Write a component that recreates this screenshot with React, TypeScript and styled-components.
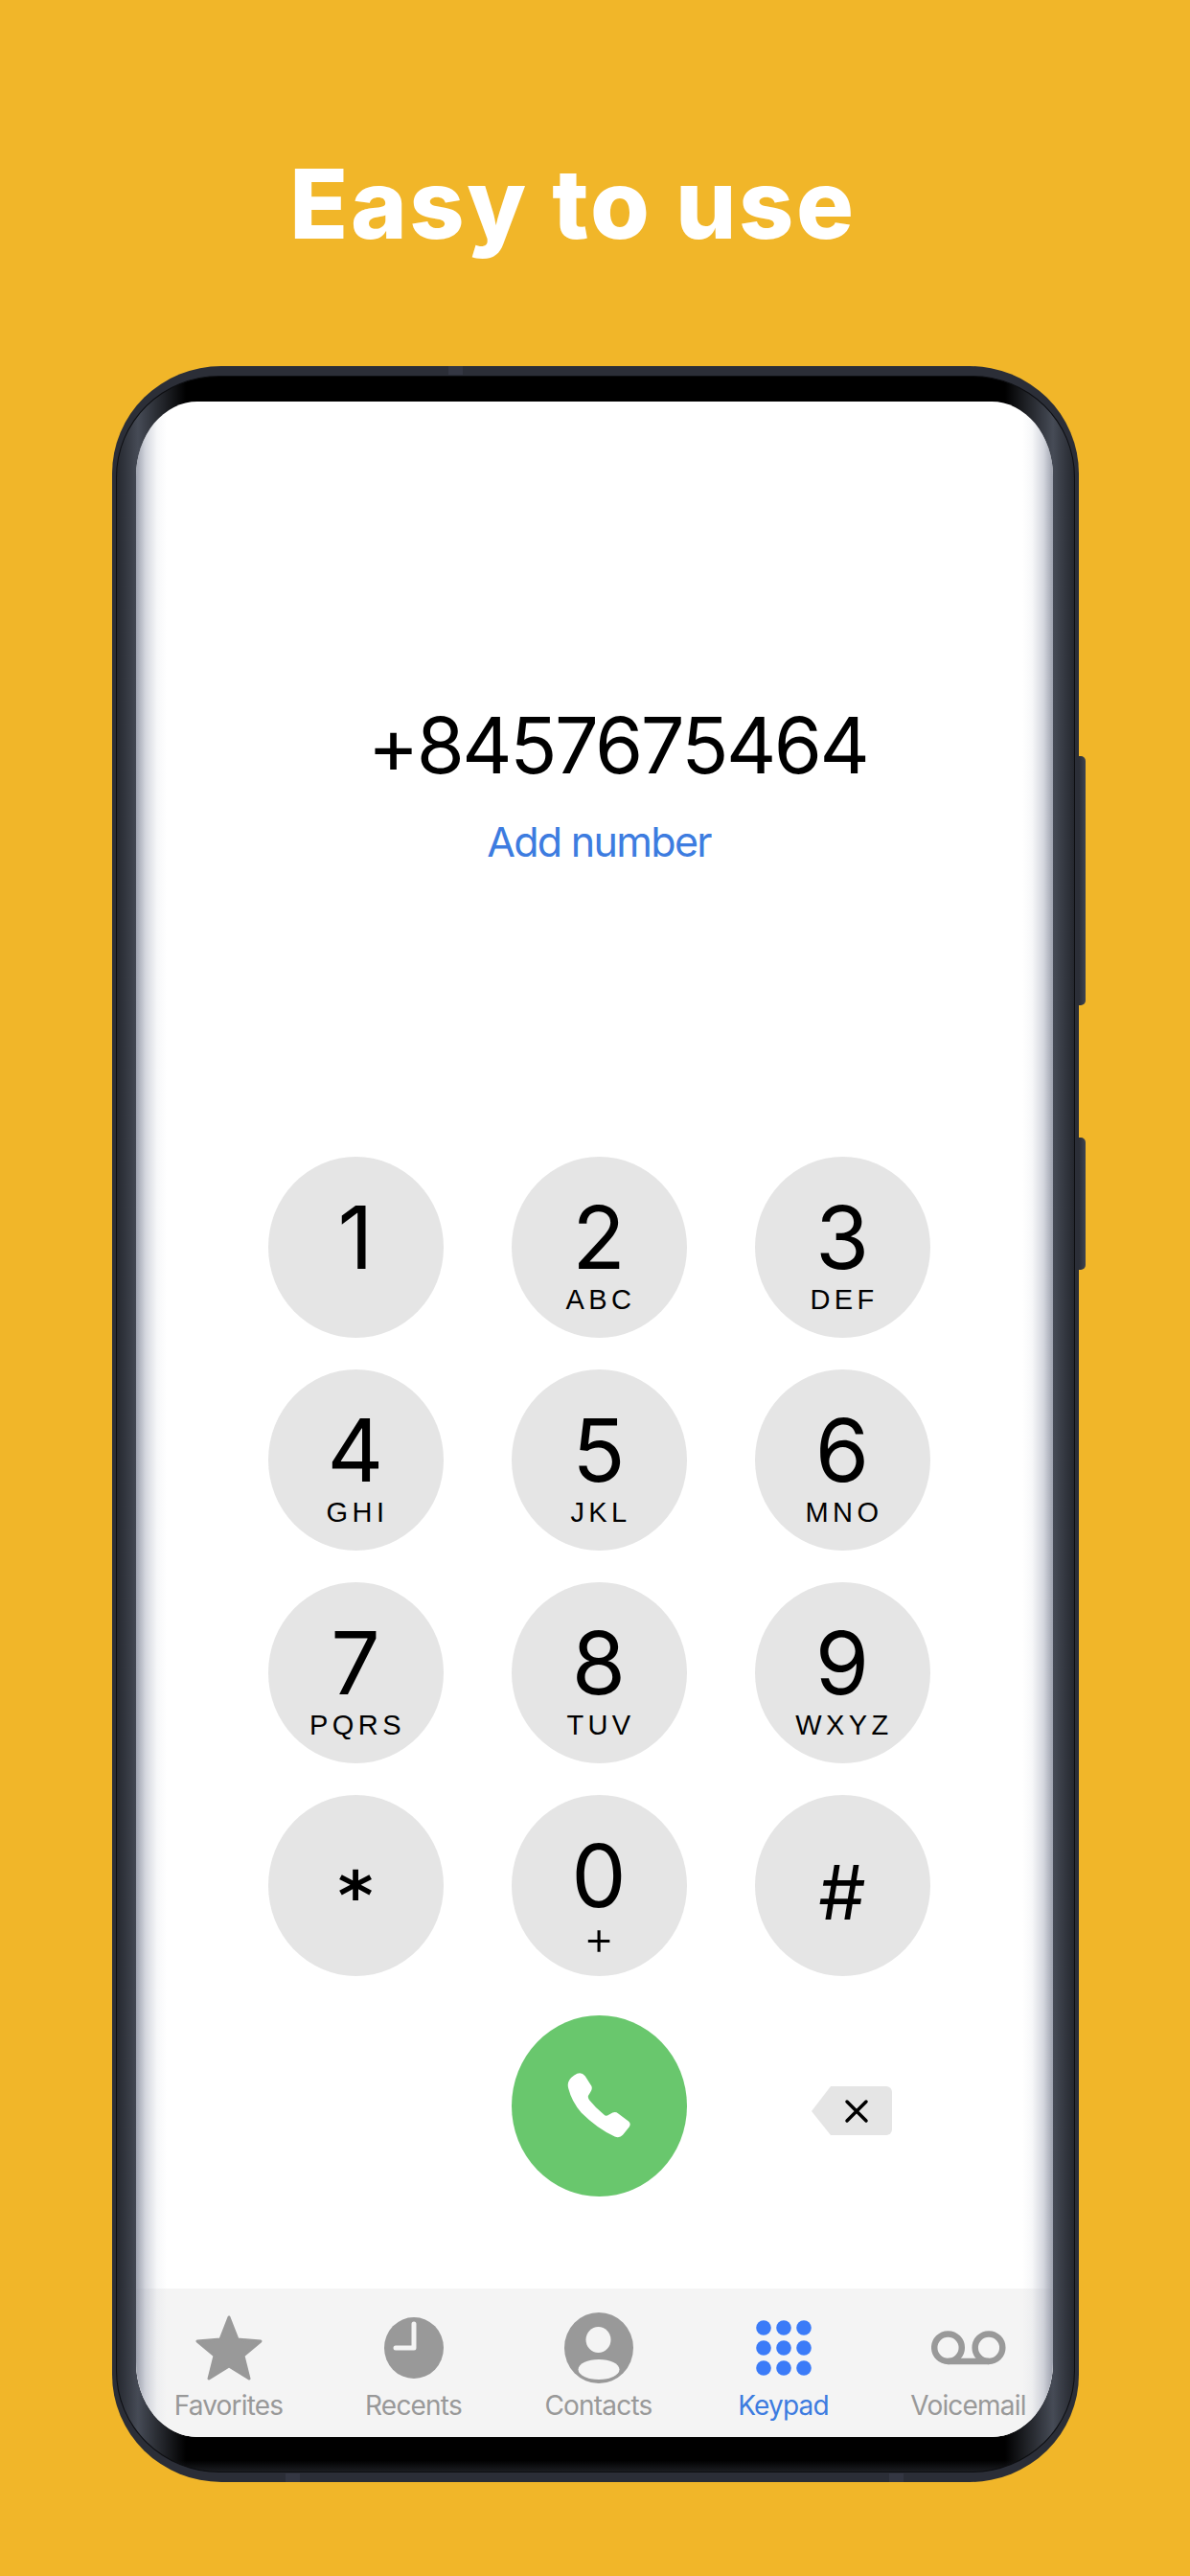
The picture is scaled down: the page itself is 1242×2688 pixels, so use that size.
import React from 'react';
import styled, { createGlobalStyle } from 'styled-components';

const GlobalStyle = createGlobalStyle`
  html, body {
    margin: 0;
    padding: 0;
    background: #f1b629;
  }
`;

const keys = [
  { digit: '1', sub: '' },
  { digit: '2', sub: 'ABC' },
  { digit: '3', sub: 'DEF' },
  { digit: '4', sub: 'GHI' },
  { digit: '5', sub: 'JKL' },
  { digit: '6', sub: 'MNO' },
  { digit: '7', sub: 'PQRS' },
  { digit: '8', sub: 'TUV' },
  { digit: '9', sub: 'WXYZ' },
];

function StarIcon() {
  return (
    <svg width="70" height="68" viewBox="0 0 70 68">
      <path
        d="M35 2 L44 25 L68 27 L50 42 L56 66 L35 53 L14 66 L20 42 L2 27 L26 25 Z"
        fill="#999"
        stroke="#999"
        strokeWidth="3"
        strokeLinejoin="round"
      />
    </svg>
  );
}

function ClockIcon() {
  return (
    <svg width="62" height="64" viewBox="0 0 62 64">
      <ellipse cx="31" cy="32" rx="31" ry="32" fill="#999" />
      <path d="M31 7 V32 H12" fill="none" stroke="#f4f4f4" strokeWidth="5" strokeLinecap="round" strokeLinejoin="round" />
    </svg>
  );
}

function ContactIcon() {
  return (
    <svg width="72" height="74" viewBox="0 0 72 74">
      <ellipse cx="36" cy="37" rx="36" ry="37" fill="#999" />
      <ellipse cx="35.5" cy="28.5" rx="13" ry="13.5" fill="#f4f4f4" />
      <ellipse cx="36" cy="59.5" rx="21.5" ry="10.5" fill="#f4f4f4" />
    </svg>
  );
}

function DotsIcon() {
  const centers = [8, 29, 50];
  return (
    <svg width="58" height="58" viewBox="0 0 58 58">
      {centers.map((cy) =>
        centers.map((cx) => <circle key={`${cx}-${cy}`} cx={cx} cy={cy} r="7.8" fill="#3b7bf8" />)
      )}
    </svg>
  );
}

function VoicemailIcon() {
  return (
    <svg width="78" height="36" viewBox="0 0 78 36" fill="none" stroke="#999" strokeWidth="6.5">
      <circle cx="17.5" cy="17.7" r="14.3" />
      <circle cx="60" cy="17.7" r="14.3" />
      <path d="M17.5 32 H60" />
    </svg>
  );
}

function PhoneIcon() {
  return (
    <svg width="70" height="72" viewBox="270 245 210 215">
      <path
        fill="#fff"
        d="M298 258 Q318 243 332 260 L352 292 Q356 302 348 312 L342 322 Q340 328 345 335 Q365 360 390 380 Q396 386 402 384 L418 375 Q428 371 436 378 L468 402 Q477 410 470 420 L450 445 Q440 456 425 450 Q370 425 320 375 Q290 340 280 300 Q272 275 298 258 Z"
      />
    </svg>
  );
}

function BackspaceIcon() {
  return (
    <svg width="84" height="51" viewBox="0 0 84 51">
      <path d="M20 0 H78 A6 6 0 0 1 84 6 V45 A6 6 0 0 1 78 51 H20 L0 26 Z" fill="#e5e5e5" />
      <path d="M37 16 L57 36 M57 16 L37 36" stroke="#000" strokeWidth="3.5" strokeLinecap="round" />
    </svg>
  );
}

const tabs = [
  { label: 'Favorites', icon: <StarIcon /> },
  { label: 'Recents', icon: <ClockIcon /> },
  { label: 'Contacts', icon: <ContactIcon /> },
  { label: 'Keypad', icon: <DotsIcon />, active: true },
  { label: 'Voicemail', icon: <VoicemailIcon /> },
];

export default function App() {
  return (
    <Page>
      <GlobalStyle />
      <Title>Easy to use</Title>
      <Shell>
        <TopNub />
        <BottomNub $left={181} />
        <BottomNub $left={811} />
        <SideButton $top={407} $height={260} />
        <SideButton $top={805} $height={138} />
        <Bezel>
          <Screen>
            <Dialed>+8457675464</Dialed>
            <AddNumber>Add number</AddNumber>
            <Keypad>
              {keys.map((key) => (
                <Key key={key.digit}>
                  <Digit>{key.digit}</Digit>
                  <Letters>{key.sub}</Letters>
                </Key>
              ))}
              <Key>
                <Asterisk>*</Asterisk>
              </Key>
              <Key>
                <Digit>0</Digit>
                <Plus>+</Plus>
              </Key>
              <Key>
                <Hash>#</Hash>
              </Key>
              <span />
              <CallButton>
                <PhoneIcon />
              </CallButton>
              <BackspaceCell>
                <BackspaceIcon />
              </BackspaceCell>
            </Keypad>
            <TabBar>
              {tabs.map((tab) => (
                <Tab key={tab.label}>
                  <TabIcon>{tab.icon}</TabIcon>
                  <TabLabel $active={tab.active}>{tab.label}</TabLabel>
                </Tab>
              ))}
            </TabBar>
          </Screen>
        </Bezel>
      </Shell>
    </Page>
  );
}

const Page = styled.div`
  display: flex;
  flex-direction: column;
  align-items: center;
  box-sizing: border-box;
  width: 1242px;
  height: 2688px;
  padding-top: 163px;
  overflow: hidden;
  background: #f1b629;
  font-family: Inter, 'Liberation Sans', Arial, sans-serif;
`;

const Title = styled.h1`
  margin: 0 46px 119px 0;
  color: #fff;
  font-size: 100px;
  font-weight: 800;
  line-height: 100px;
  letter-spacing: 2.6px;
`;

const Shell = styled.div`
  position: relative;
  box-sizing: border-box;
  flex-shrink: 0;
  width: 1009px;
  height: 2208px;
  padding: 10px 4px;
  border-radius: 114px / 112px;
  background: #2b2e37;
`;

const TopNub = styled.div`
  position: absolute;
  top: 0;
  left: 351px;
  width: 15px;
  height: 9px;
  background: #343743;
`;

const BottomNub = styled.div<{ $left: number }>`
  position: absolute;
  bottom: 0;
  left: ${({ $left }) => $left}px;
  width: 15px;
  height: 9px;
  background: #343743;
`;

const SideButton = styled.div<{ $top: number; $height: number }>`
  position: absolute;
  top: ${({ $top }) => $top}px;
  right: -7px;
  width: 7px;
  height: ${({ $height }) => $height}px;
  border-radius: 0 5px 5px 0;
  background: linear-gradient(90deg, #2a2d35, #414550);
`;

const Bezel = styled.div`
  box-sizing: border-box;
  width: 100%;
  height: 100%;
  padding: 25.5px 20.5px 35.5px;
  border: 1.5px solid #0d0e11;
  border-radius: 108px / 106px;
  background:
    linear-gradient(0deg, #1b1d21, transparent 12px),
    linear-gradient(
      90deg,
      #25282f 0,
      #464b56 22px,
      #000 72px,
      #000 calc(100% - 72px),
      #464b56 calc(100% - 22px),
      #25282f 100%
    );
`;

const Screen = styled.div`
  position: relative;
  display: flex;
  flex-direction: column;
  align-items: center;
  box-sizing: border-box;
  width: 957px;
  height: 2124px;
  padding-top: 318px;
  border-radius: 64px / 78px;
  overflow: hidden;
  background: #fff;

  &::after {
    content: '';
    position: absolute;
    inset: 0;
    pointer-events: none;
    background: linear-gradient(
      90deg,
      rgba(140, 145, 160, 0.85) 0,
      rgba(170, 175, 190, 0.5) 10px,
      rgba(200, 205, 215, 0.15) 22px,
      rgba(255, 255, 255, 0) 32px,
      rgba(255, 255, 255, 0) calc(100% - 32px),
      rgba(200, 205, 215, 0.15) calc(100% - 22px),
      rgba(170, 175, 190, 0.5) calc(100% - 10px),
      rgba(140, 145, 160, 0.85) 100%
    );
  }
`;

const Dialed = styled.div`
  margin-left: 48px;
  color: #000;
  font-size: 81px;
  font-weight: 380;
  line-height: 83px;
  letter-spacing: -2.5px;
`;

const AddNumber = styled.div`
  margin: 37px 0 0 9px;
  color: #3d7ce0;
  font-size: 43px;
  font-weight: 380;
  line-height: 43px;
  letter-spacing: -1.7px;
`;

const Keypad = styled.div`
  display: grid;
  grid-template-columns: repeat(3, 183px);
  grid-auto-rows: 189px;
  column-gap: 71px;
  row-gap: 33px;
  margin: 307px 0 0 9px;
`;

const Key = styled.div`
  display: flex;
  flex-direction: column;
  align-items: center;
  padding-top: 39px;
  box-sizing: border-box;
  border-radius: 50%;
  background: #e5e5e5;
  color: #000;
`;

const Digit = styled.div`
  font-size: 91px;
  font-weight: 370;
  line-height: 91px;
`;

const Letters = styled.div`
  margin-top: 4px;
  padding-left: 4px;
  font-family: 'Liberation Sans', Arial, sans-serif;
  font-size: 29px;
  line-height: 30px;
  letter-spacing: 4.4px;
`;

const Plus = styled.div`
  margin-top: 4px;
  font-size: 50px;
  font-weight: 300;
  line-height: 30px;
`;

const Asterisk = styled.div`
  margin-top: 27px;
  font-family: 'DejaVu Sans', sans-serif;
  font-size: 70px;
  font-weight: 700;
  line-height: 78px;
`;

const Hash = styled.div`
  margin-top: 22px;
  font-size: 78px;
  font-weight: 370;
  line-height: 82px;
`;

const CallButton = styled.div`
  display: flex;
  align-items: center;
  justify-content: center;
  height: 189px;
  margin-top: 8px;
  border-radius: 50%;
  background: #69c76d;
`;

const BackspaceCell = styled.div`
  display: flex;
  align-items: center;
  padding: 26px 0 0 59px;
`;

const TabBar = styled.div`
  display: grid;
  grid-template-columns: repeat(5, 193px);
  align-self: stretch;
  box-sizing: border-box;
  height: 155px;
  margin-top: auto;
  padding-top: 22px;
  background: #f4f4f4;
`;

const Tab = styled.div`
  display: flex;
  flex-direction: column;
  align-items: center;
`;

const TabIcon = styled.div`
  display: flex;
  align-items: center;
  justify-content: center;
  height: 80px;
`;

const TabLabel = styled.div<{ $active?: boolean }>`
  margin-top: 6px;
  color: ${({ $active }) => ($active ? '#3d7ce0' : '#999')};
  font-size: 28px;
  line-height: 28px;
  letter-spacing: -0.8px;
`;
